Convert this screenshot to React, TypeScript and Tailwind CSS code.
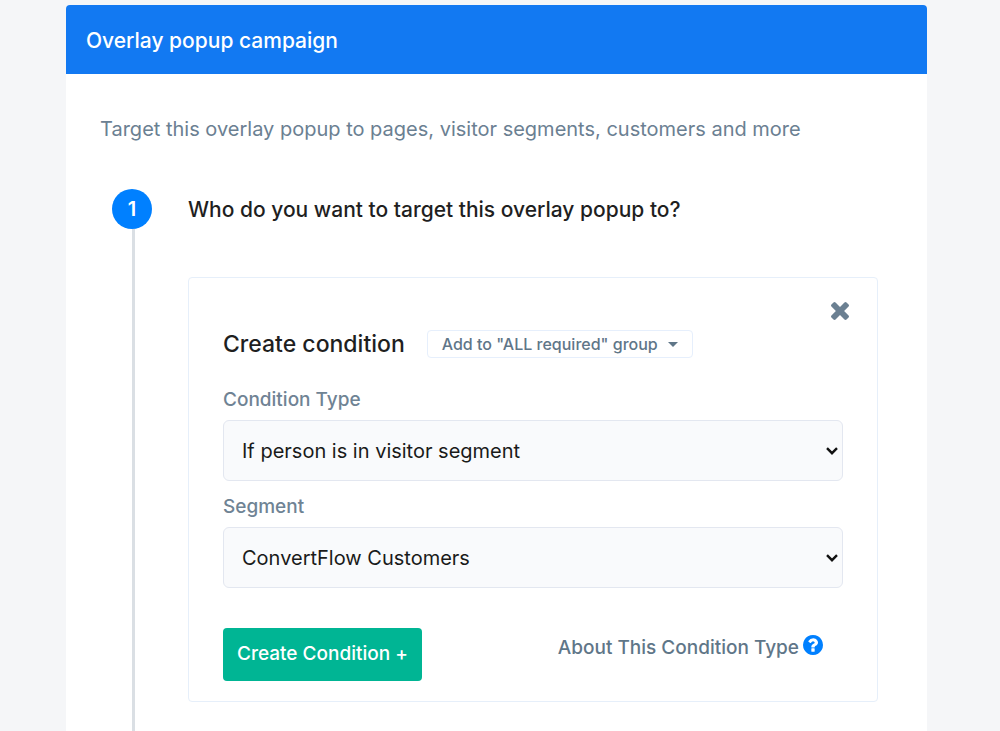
import { useId, useState } from 'react';

type SelectFieldProps = {
  label: string;
  options: string[];
};

const CloseIcon = () => (
  <svg viewBox="302 366 1188 1188" className="h-[18px] w-[18px] fill-current" aria-hidden="true">
    <path d="M1490 1322q0 40-28 68l-136 136q-28 28-68 28t-68-28l-294-294-294 294q-28 28-68 28t-68-28l-136-136q-28-28-28-68t28-68l294-294-294-294q-28-28-28-68t28-68l136-136q28-28 68-28t68 28l294 294 294-294q28-28 68-28t68 28l136 136q28 28 28 68t-28 68l-294 294 294 294q28 28 28 68z" />
  </svg>
);

const QuestionIcon = () => (
  <svg viewBox="128 128 1536 1536" className="h-5 w-5 fill-[#0080ff]" aria-hidden="true">
    <path d="M1024 1376v-192q0-14-9-23t-23-9h-192q-14 0-23 9t-9 23v192q0 14 9 23t23 9h192q14 0 23-9t9-23zm256-672q0-88-55.5-163t-138.5-116-170-41q-243 0-371 213-15 24 8 42l132 100q7 6 19 6 16 0 25-12 53-68 86-92 34-24 86-24 48 0 85.5 26t37.5 59q0 38-20 61t-68 45q-63 28-115.5 86.5t-52.5 125.5v36q0 14 9 23t23 9h192q14 0 23-9t9-23q0-19 21.5-49.5t54.5-49.5q32-18 49-28.5t46-35 44.5-48 28-60.5 12.5-81zm384 192q0 209-103 385.5t-279.5 279.5-385.5 103-385.5-103-279.5-279.5-103-385.5 103-385.5 279.5-279.5 385.5-103 385.5 103 279.5 279.5 103 385.5z" />
  </svg>
);

const SelectField = ({ label, options }: SelectFieldProps) => {
  const id = useId();
  const [value, setValue] = useState(options[0]);

  return (
    <div className="flex flex-col gap-1.5">
      <label htmlFor={id} className="text-[19px] leading-7 font-medium text-[#6f8394]">
        {label}
      </label>
      <div className="relative">
        <select
          id={id}
          value={value}
          onChange={(e) => setValue(e.target.value)}
          className="h-[61px] w-full appearance-none rounded-md border border-[#e3e7f0] bg-[#f9fafc] pr-10 pl-[18px] text-[20px] text-[#1a1a1a]"
        >
          {options.map((option) => (
            <option key={option}>{option}</option>
          ))}
        </select>
        <svg
          viewBox="0 0 12 8"
          className="pointer-events-none absolute top-[27px] right-[5px] h-2 w-3 fill-none stroke-[#111] stroke-[2.4]"
          aria-hidden="true"
        >
          <path d="M1 1.2l5 5 5-5" />
        </svg>
      </div>
    </div>
  );
};

const ConditionForm = () => {
  return (
    <form
      onSubmit={(e) => e.preventDefault()}
      className="mt-[46px] rounded border border-[#e6effa] pt-6 pb-5"
    >
      <div className="flex justify-end pr-7">
        <button type="button" aria-label="Close" className="cursor-pointer text-[#6b8092]">
          <CloseIcon />
        </button>
      </div>
      <div className="px-[34px] pt-2.5">
        <div className="flex items-center gap-[22px]">
          <h3 className="text-[23px] leading-7 font-medium text-[#1f1f1f]">Create condition</h3>
          <button
            type="button"
            className="flex h-7 cursor-pointer items-center gap-2.5 rounded border border-[#e6effc] px-3.5 text-[16px] font-medium text-[#5f7688]"
          >
            Add to "ALL required" group
            <svg viewBox="0 0 10 5" className="h-[5px] w-2.5 fill-current" aria-hidden="true">
              <path d="M0 0h10L5 5z" />
            </svg>
          </button>
        </div>
        <div className="mt-7 flex flex-col gap-3">
          <SelectField label="Condition Type" options={['If person is in visitor segment']} />
          <SelectField label="Segment" options={['ConvertFlow Customers']} />
        </div>
        <div className="mt-10 flex items-start justify-between">
          <button
            type="submit"
            className="h-[53px] cursor-pointer rounded bg-[#00b594] px-3.5 text-[19px] font-medium text-white"
          >
            Create Condition +
          </button>
          <a href="#" className="mt-1.5 mr-5 flex gap-1 text-[19px] leading-7 font-medium text-[#5f7688]">
            About This Condition Type
            <span className="pt-px">
              <QuestionIcon />
            </span>
          </a>
        </div>
      </div>
    </form>
  );
};

const App = () => {
  return (
    <main className="flex min-h-screen bg-[#f5f6f8] pt-[5px] pr-[73px] pl-[66px] font-['Inter','Liberation_Sans',sans-serif]">
      <section className="flex flex-1 flex-col rounded-t bg-white">
        <header className="rounded-t bg-[#1279f2] px-5 pt-[21px] pb-[19px]">
          <h1 className="text-[21px] leading-[29px] font-medium text-white">Overlay popup campaign</h1>
        </header>
        <p className="px-[34px] pt-10 text-[20px] leading-[30px] text-[#6b8092]">
          Target this overlay popup to pages, visitor segments, customers and more
        </p>
        <div className="mt-[45px] flex flex-1 gap-9 pr-[49px] pl-[46px]">
          <div className="flex flex-col items-center">
            <span className="flex h-10 w-10 items-center justify-center rounded-full bg-[#0080ff] text-[20px] font-semibold text-white">
              1
            </span>
            <span className="ml-[3px] w-[3px] flex-1 bg-[#dadfe4]" />
          </div>
          <div className="flex-1 pb-7">
            <h2 className="text-[21px] leading-[42px] font-medium text-[#1f1f1f]">
              Who do you want to target this overlay popup to?
            </h2>
            <ConditionForm />
          </div>
        </div>
      </section>
    </main>
  );
};

export default App;
